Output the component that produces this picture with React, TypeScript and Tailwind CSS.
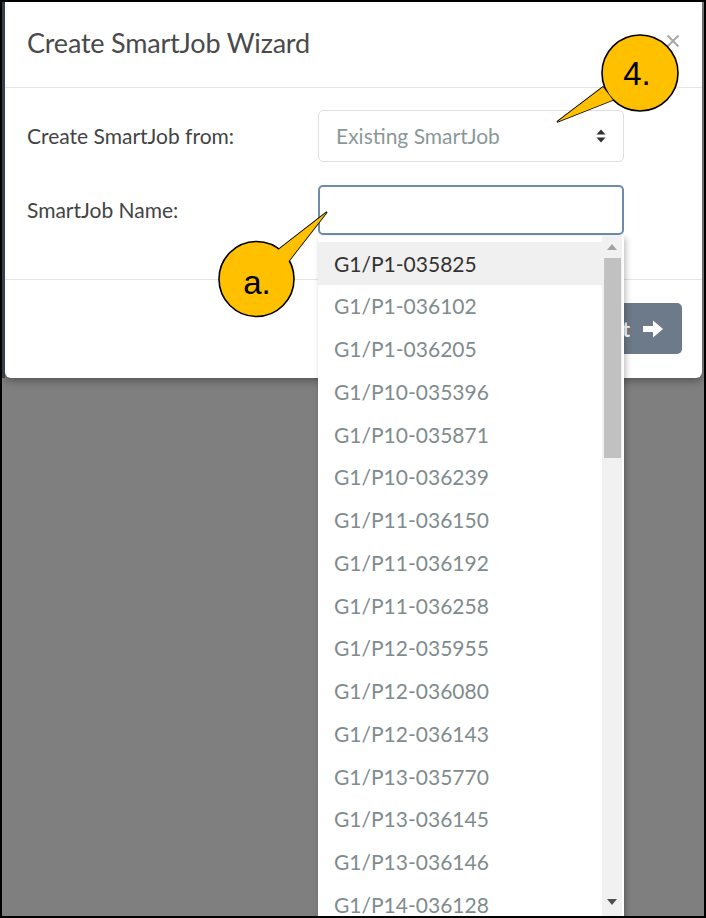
import React from "react";

const items = [
  "G1/P1-035825",
  "G1/P1-036102",
  "G1/P1-036205",
  "G1/P10-035396",
  "G1/P10-035871",
  "G1/P10-036239",
  "G1/P11-036150",
  "G1/P11-036192",
  "G1/P11-036258",
  "G1/P12-035955",
  "G1/P12-036080",
  "G1/P12-036143",
  "G1/P13-035770",
  "G1/P13-036145",
  "G1/P13-036146",
  "G1/P14-036128",
];

function Callout({ cx, cy, r, tip, b1, b2, label, fs, tx, ty }: { cx: number; cy: number; r: number; tip: [number, number]; b1: [number, number]; b2: [number, number]; label: string; fs: number; tx: number; ty: number }) {
  const poly = `${b1[0]},${b1[1]} ${tip[0]},${tip[1]} ${b2[0]},${b2[1]}`;
  return (
    <g>
      <polygon points={poly} fill="#FFC000" stroke="#000" strokeWidth={1.6} strokeLinejoin="miter" />
      <circle cx={cx} cy={cy} r={r} fill="#FFC000" stroke="#000" strokeWidth={1.6} />
      <polygon points={poly} fill="#FFC000" stroke="none" />
      <text x={tx} y={ty} fontFamily="'Liberation Sans', Arial, sans-serif" fontSize={fs} fill="#000" textAnchor="middle">
        {label}
      </text>
    </g>
  );
}

export default function App() {
  return (
    <div className="relative w-[706px] h-[918px] overflow-hidden border-2 border-black bg-[#7f7f7f] font-['Lato','Open_Sans',sans-serif]">
      <div className="absolute left-0 top-0 h-[376px] w-[3px] bg-[#34414f]" />
      <div className="pl-[3px] pr-[2px]">
        <div className="h-[376px] bg-white rounded-b-[6px] shadow-[0_3px_8px_rgba(0,0,0,0.35)] flex flex-col">
          {/* header */}
          <div className="h-[86px] border-b border-[#e5e5e5] flex items-center justify-between pl-[22px] pr-[22px]">
            <div className="text-[27px] text-[#4a4a4a] tracking-[-0.2px] pb-[2px]">Create SmartJob Wizard</div>
            <svg width="14" height="14" viewBox="0 0 14 14" className="mb-[8px]">
              <path d="M1.5 1.5 L12.5 12.5 M12.5 1.5 L1.5 12.5" stroke="#a8a8a8" strokeWidth="2" />
            </svg>
          </div>
          {/* body */}
          <div className="h-[192px] border-b border-[#e5e5e5] pt-[22px] pl-[22px] flex flex-col gap-[23px]">
            <div className="flex items-center">
              <div className="w-[291px] text-[21px] text-[#444]">Create SmartJob from:</div>
              <div className="w-[306px] h-[52px] rounded-[5px] border border-[#dce0e3] flex items-center justify-between pl-[17px] pr-[17px]">
                <span className="text-[21px] text-[#8c9898]">Existing SmartJob</span>
                <svg width="10" height="14" viewBox="0 0 10 14">
                  <path d="M5 0.5 L9.5 5.5 L0.5 5.5 Z" fill="#333" />
                  <path d="M0.5 8.5 L9.5 8.5 L5 13.5 Z" fill="#333" />
                </svg>
              </div>
            </div>
            <div className="flex items-center">
              <div className="w-[291px] text-[21px] text-[#444]">SmartJob Name:</div>
              <div className="w-[306px] h-[50px] rounded-[5px] border-2 border-[#6f8bab]" />
            </div>
          </div>
          {/* footer */}
          <div className="flex-1 flex items-start justify-end pt-[23px] pr-[20px]">
            <div className="h-[51px] rounded-[5px] bg-[#6c7a89] flex items-center gap-[12px] pl-[20px] pr-[18px]">
              <span className="text-[21px] text-white font-bold">Next</span>
              <svg width="22" height="20" viewBox="0 0 22 20">
                <path d="M1 7 L11 7 L11 1.5 L21 10 L11 18.5 L11 13 L1 13 Z" fill="#fff" />
              </svg>
            </div>
          </div>
        </div>
      </div>

      {/* dropdown */}
      <div className="absolute left-[316px] top-[234px] w-[306px] h-[684px] bg-white shadow-[2px_2px_6px_rgba(0,0,0,0.25)] flex">
        <div className="flex-1 pt-[6px] flex flex-col">
          {items.map((it, i) => (
            <div
              key={it}
              className={
                i === 0
                  ? "h-[42.75px] shrink-0 flex items-center pl-[16px] bg-[#f0f0f0] text-[21px] text-[#333]"
                  : "h-[42.75px] shrink-0 flex items-center pl-[16px] text-[21px] text-[#7f8c8d]"
              }
            >
              {it}
            </div>
          ))}
        </div>
        <div className="w-[20px] bg-[#f1f1f1] flex flex-col items-center mr-[2px]">
          <div className="h-[22px] flex items-center justify-center">
            <svg width="10" height="6" viewBox="0 0 10 6"><path d="M5 0 L10 6 L0 6 Z" fill="#a3a3a3" /></svg>
          </div>
          <div className="w-[17px] h-[200px] bg-[#c1c1c1]" />
          <div className="flex-1" />
          <div className="h-[26px] flex items-start justify-center pt-[5px]">
            <svg width="10" height="6" viewBox="0 0 10 6"><path d="M0 0 L10 0 L5 6 Z" fill="#505050" /></svg>
          </div>
        </div>
      </div>

      {/* callouts */}
      <svg className="absolute left-[-2px] top-[-2px] pointer-events-none" width="706" height="918" viewBox="0 0 706 918">
        <Callout cx={640} cy={73} r={38} tip={[557, 122]} b1={[603, 87]} b2={[613, 100]} label="4." fs={33} tx={637} ty={85} />
        <Callout cx={256.5} cy={279} r={37.5} tip={[327, 212]} b1={[278, 250]} b2={[288, 262]} label="a." fs={33} tx={257} ty={294} />
      </svg>
    </div>
  );
}
